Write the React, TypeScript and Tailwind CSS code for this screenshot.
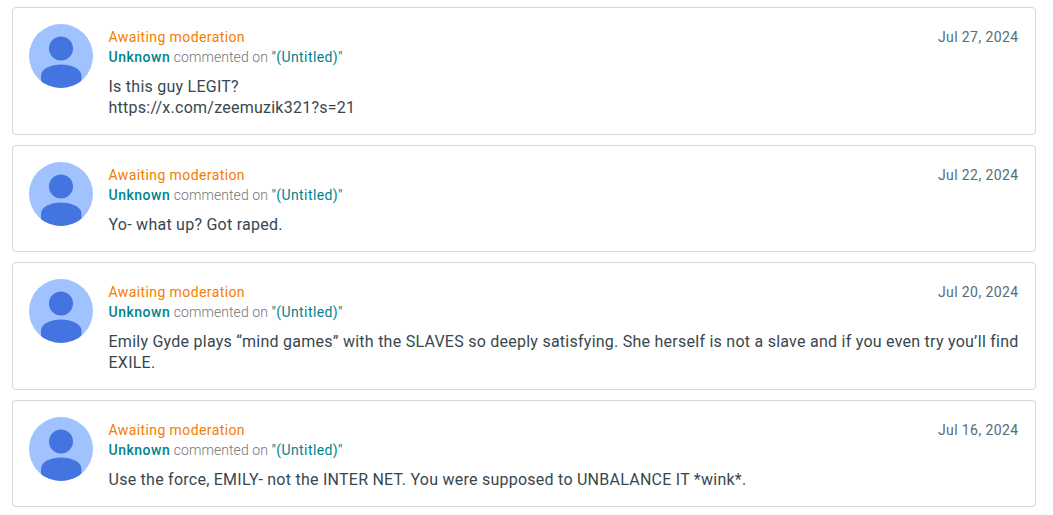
const comments = [
  {
    date: "Jul 27, 2024",
    lines: ["Is this guy LEGIT?", "https://x.com/zeemuzik321?s=21"],
  },
  {
    date: "Jul 22, 2024",
    lines: ["Yo- what up? Got raped."],
  },
  {
    date: "Jul 20, 2024",
    lines: [
      "Emily Gyde plays “mind games” with the SLAVES so deeply satisfying. She herself is not a slave and if you even try you’ll find EXILE.",
    ],
  },
  {
    date: "Jul 16, 2024",
    lines: ["Use the force, EMILY- not the INTER NET. You were supposed to UNBALANCE IT *wink*."],
  },
];

function Avatar() {
  return (
    <svg viewBox="0 0 64 64" className="size-16 shrink-0 rounded-full bg-[#a0c3ff]">
      <circle cx="32" cy="24.5" r="12" fill="#4374e0" />
      <path d="M12 64V52C12 44.5 22 40.5 32 40.5S52.5 44.5 52.5 52V64Z" fill="#4374e0" />
    </svg>
  );
}

function CommentCard({ date, lines }: { date: string; lines: string[] }) {
  return (
    <article className="flex gap-[15.5px] rounded border border-[#cfd8dc] p-4">
      <Avatar />
      <div className="min-w-0 flex-1 pt-[3px]">
        <div className="flex justify-between text-sm leading-5 tracking-[0.4px]">
          <p className="text-[#f57c00]">Awaiting moderation</p>
          <p className="pr-[0.5px] text-[#546e7a]">{date}</p>
        </div>
        <p className="text-sm leading-5 text-[#757575]">
          <span className="font-medium tracking-[0.5px] text-[#00838f]">Unknown</span>{" "}
          <span className="font-light tracking-[0.08px]">commented on </span>
          <span className="tracking-[0.4px] text-[#00838f]">"(Untitled)"</span>
        </p>
        <div className="-mr-1 mt-[9px] text-base leading-[21px] tracking-[0.25px] text-[#37474f]">
          {lines.map((line) => (
            <p key={line}>{line}</p>
          ))}
        </div>
      </div>
    </article>
  );
}

export default function App() {
  return (
    <main className="flex flex-col gap-2.5 bg-white pt-[7px] pr-[17px] pl-3 font-[Roboto,sans-serif]">
      {comments.map((comment) => (
        <CommentCard key={comment.date} {...comment} />
      ))}
    </main>
  );
}
